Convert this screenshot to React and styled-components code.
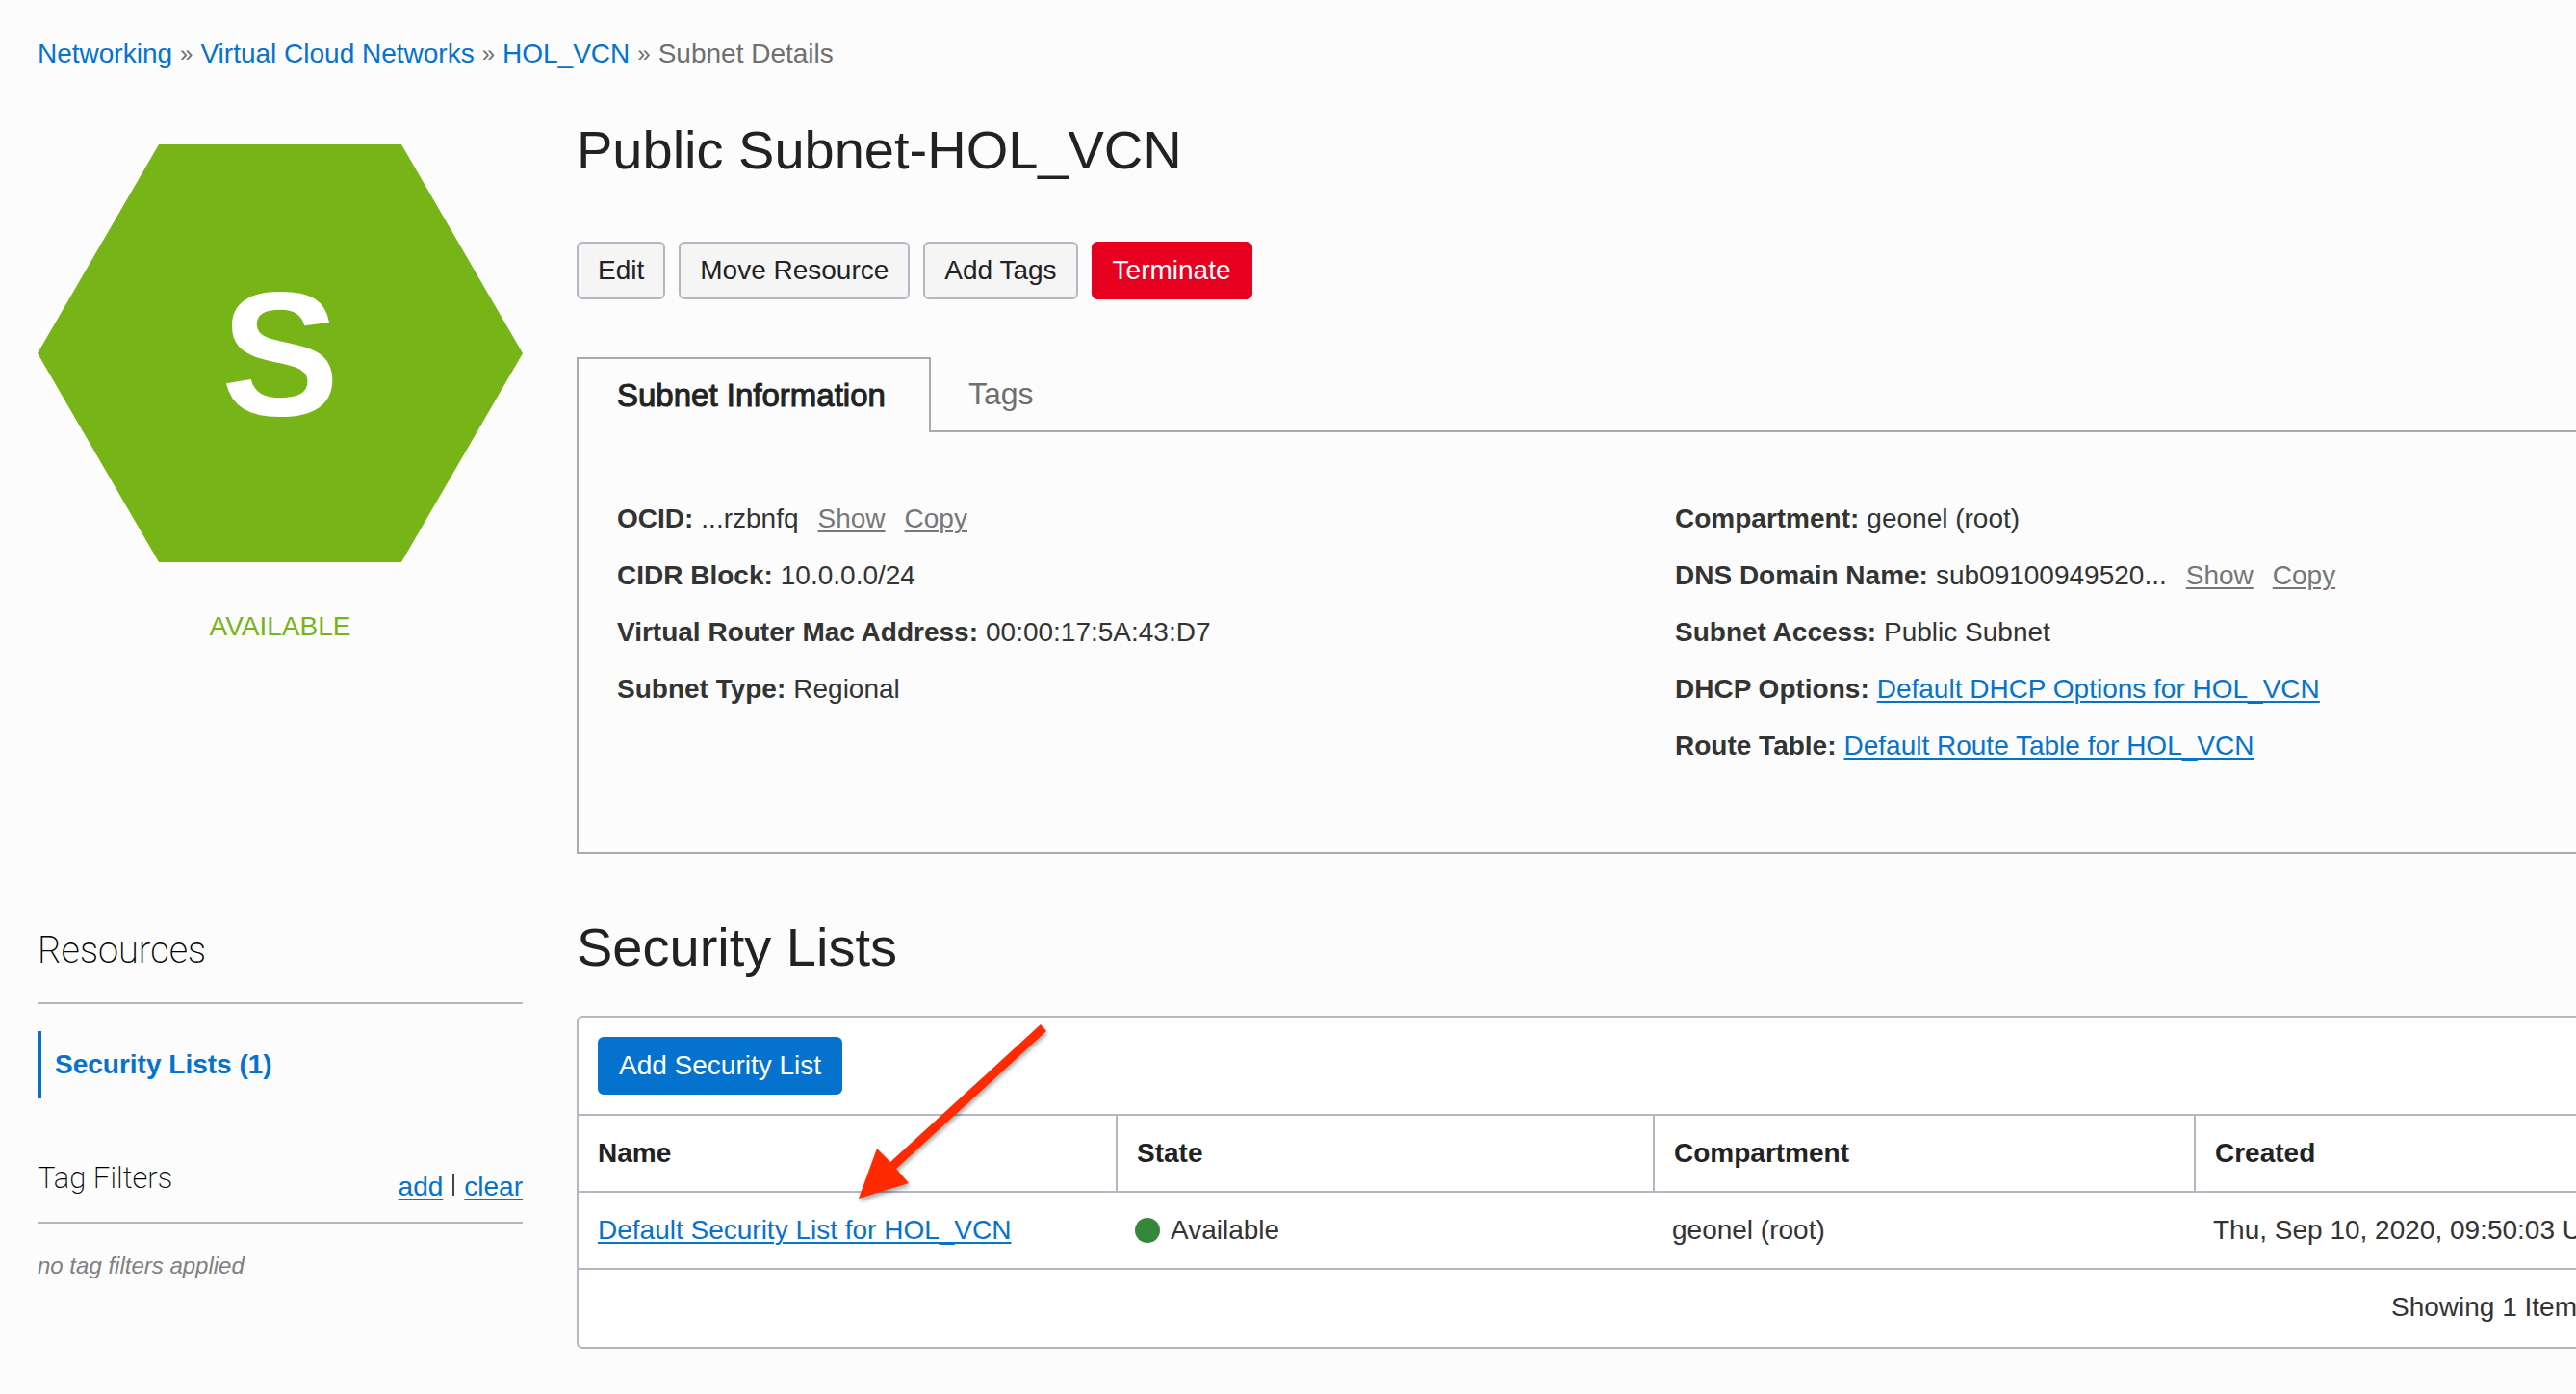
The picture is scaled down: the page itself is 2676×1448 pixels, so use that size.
import React from "react";
import styled, { createGlobalStyle, css } from "styled-components";

const color = {
  page: "#fcfcfc",
  link: "#0572ce",
  heading: "#222222",
  text: "#333333",
  muted: "#6f6f6f",
  line: "#b2b8c2",
  panelLine: "#aaaaaa",
  green: "#77b418",
  danger: "#e7001f",
};

const GlobalStyle = createGlobalStyle`
  *, *::before, *::after { box-sizing: border-box; }
  body {
    margin: 0;
    overflow-x: hidden;
    background: ${color.page};
    color: ${color.text};
    font-family: "Helvetica Neue", "Liberation Sans", Arial, sans-serif;
    font-size: 28px;
    line-height: 36px;
  }
  h1, h2, h3, p, ul, ol, dl, dd { margin: 0; padding: 0; }
  button { font: inherit; cursor: pointer; }
`;

/* The console is wider than the window; its right edge runs out of view. */
const Page = styled.div`
  width: calc(100% + 204px);
  padding: 38px 39px 47px;
`;

const Breadcrumb = styled.nav`
  display: flex;
  gap: 8px;
  color: ${color.muted};
`;

const Crumb = styled.a`
  color: ${color.link};
  text-decoration: none;
`;

const Separator = styled.span`
  font-size: 24px;
`;

const Layout = styled.div`
  display: grid;
  grid-template-columns: 504px minmax(0, 1fr);
  column-gap: 56px;
  row-gap: 65px;
  padding-top: 50px;
`;

const StatusPane = styled.aside`
  display: flex;
  flex-direction: column;
  gap: 49px;
  padding-top: 26px;
  text-align: center;
`;

const Hexagon = styled.div`
  display: flex;
  align-items: center;
  justify-content: center;
  height: 434px;
  background: ${color.green};
  clip-path: polygon(25% 0, 75% 0, 100% 50%, 75% 100%, 25% 100%, 0 50%);
  color: #ffffff;
  font-size: 184px;
  font-weight: 700;
  line-height: 200px;
`;

const StatusText = styled.p`
  color: ${color.green};
`;

const Main = styled.main`
  min-width: 0;
`;

const Title = styled.h1`
  color: ${color.heading};
  font-size: 56px;
  font-weight: 400;
  line-height: 64px;
`;

const ButtonRow = styled.div`
  display: flex;
  gap: 14px;
  margin: 63px 0 60px;
`;

const variants = {
  plain: css`
    background: #f5f5f5;
    border-color: ${color.line};
    color: ${color.heading};
  `,
  danger: css`
    background: ${color.danger};
    border-color: ${color.danger};
    color: #ffffff;
  `,
  primary: css`
    background: ${color.link};
    border-color: ${color.link};
    color: #ffffff;
  `,
};

const Button = styled.button`
  height: 60px;
  padding: 0 20px;
  border: 2px solid;
  border-radius: 6px;
  ${(p) => variants[p.$variant || "plain"]}
`;

const TabList = styled.div`
  display: flex;
  height: 78px;

  &::after {
    content: "";
    flex: 1;
    border-bottom: 2px solid ${color.panelLine};
  }
`;

const Tab = styled.button`
  background: none;
  border: 0 solid ${color.panelLine};
  border-bottom-width: 2px;
  padding: 0 39px;
  color: ${color.muted};
  font-size: 32px;
  line-height: 40px;
  text-align: left;

  &[aria-selected="true"] {
    min-width: 368px;
    padding: 0 40px;
    border-width: 2px 2px 0;
    color: ${color.heading};
    font-size: 33px;
    -webkit-text-stroke: 1px ${color.heading};
  }
`;

const TabPanel = styled.div`
  display: grid;
  grid-template-columns: 1fr 1fr;
  gap: 40px;
  padding: 60px 40px 81px;
  border: 2px solid ${color.panelLine};
  border-top: 0;
`;

const FactRow = styled.div`
  display: flex;
  gap: 8px;
  line-height: 59px;
`;

const FactLabel = styled.dt`
  font-weight: 700;
`;

const FactValue = styled.dd`
  display: flex;
  gap: 20px;
`;

const underline = css`
  text-decoration: underline;
  text-decoration-thickness: 2px;
  text-underline-offset: 3px;
`;

const Link = styled.a`
  color: ${color.link};
  ${underline}
`;

const TextButton = styled.button`
  padding: 0;
  border: 0;
  background: none;
  color: ${(p) => (p.$accent ? color.link : "#777777")};
  ${underline}
`;

const ResourcePane = styled.aside`
  padding-top: 11px;
`;

const PaneTitle = styled.h2`
  padding-bottom: 30px;
  border-bottom: 2px solid ${color.line};
  color: #000000;
  font-family: Roboto, "Liberation Sans", sans-serif;
  font-size: 38px;
  font-weight: 200;
  line-height: 48px;
`;

const ResourceLink = styled.a`
  display: flex;
  align-items: center;
  height: 70px;
  margin-top: 28px;
  padding-left: 14px;
  border-left: 4px solid ${color.link};
  color: ${color.link};
  font-weight: 700;
  text-decoration: none;
`;

const FilterHeader = styled.div`
  display: flex;
  justify-content: space-between;
  height: 67px;
  margin-top: 63px;
  border-bottom: 2px solid ${color.line};
`;

const FilterTitle = styled.h3`
  color: #000000;
  font-family: Roboto, "Liberation Sans", sans-serif;
  font-size: 31px;
  font-weight: 200;
  line-height: 40px;
`;

const FilterActions = styled.div`
  display: flex;
  gap: 10px;
  height: 47px;
  padding-top: 11px;
`;

const Divider = styled.span`
  width: 2px;
  height: 23px;
  margin-top: 4px;
  background: #444444;
`;

const FilterNote = styled.p`
  margin-top: 28px;
  color: #808080;
  font-size: 24px;
  font-style: italic;
  line-height: 32px;
`;

const Card = styled.section`
  position: relative;
  margin-top: 39px;
  background: #ffffff;
  border: 2px solid ${color.line};
  border-radius: 6px;
`;

const CardToolbar = styled.div`
  padding: 20px;
`;

const Table = styled.table`
  width: 100%;
  table-layout: fixed;
  border-spacing: 0;
  border: solid ${color.line};
  border-width: 2px 0;
`;

const Col = styled.col`
  width: ${(p) => p.$width};
`;

const Th = styled.th`
  height: 78px;
  padding: 0 20px;
  color: ${color.heading};
  text-align: left;

  & + & {
    border-left: 2px solid ${color.line};
  }
`;

const Td = styled.td`
  height: 80px;
  padding: 0 20px;
  border-top: 2px solid ${color.line};
  white-space: nowrap;
`;

const State = styled.span`
  display: flex;
  align-items: center;
  gap: 11px;

  &::before {
    content: "";
    width: 26px;
    height: 26px;
    border-radius: 50%;
    background: #35883a;
  }
`;

const CardFooter = styled.div`
  padding: 21px 162px 23px 20px;
  text-align: right;
`;

const Arrow = styled.svg`
  position: absolute;
  left: 279px;
  top: -3px;
  filter: drop-shadow(1px 3px 2px rgba(0, 0, 0, 0.35));
  pointer-events: none;
`;

const leftFacts = [
  { label: "OCID:", value: "...rzbnfq", actions: true },
  { label: "CIDR Block:", value: "10.0.0.0/24" },
  { label: "Virtual Router Mac Address:", value: "00:00:17:5A:43:D7" },
  { label: "Subnet Type:", value: "Regional" },
];

const rightFacts = [
  { label: "Compartment:", value: "geonel (root)" },
  { label: "DNS Domain Name:", value: "sub09100949520...", actions: true },
  { label: "Subnet Access:", value: "Public Subnet" },
  { label: "DHCP Options:", value: "Default DHCP Options for HOL_VCN", link: true },
  { label: "Route Table:", value: "Default Route Table for HOL_VCN", link: true },
];

function Facts({ items }) {
  return (
    <dl>
      {items.map((f) => (
        <FactRow key={f.label}>
          <FactLabel>{f.label}</FactLabel>
          <FactValue>
            {f.link ? <Link href="#">{f.value}</Link> : <span>{f.value}</span>}
            {f.actions && <TextButton type="button">Show</TextButton>}
            {f.actions && <TextButton type="button">Copy</TextButton>}
          </FactValue>
        </FactRow>
      ))}
    </dl>
  );
}

export default function App() {
  return (
    <>
      <GlobalStyle />
      <Page>
        <Breadcrumb aria-label="Breadcrumb">
          <Crumb href="#">Networking</Crumb>
          <Separator>»</Separator>
          <Crumb href="#">Virtual Cloud Networks</Crumb>
          <Separator>»</Separator>
          <Crumb href="#">HOL_VCN</Crumb>
          <Separator>»</Separator>
          <span>Subnet Details</span>
        </Breadcrumb>

        <Layout>
          <StatusPane>
            <Hexagon>S</Hexagon>
            <StatusText>AVAILABLE</StatusText>
          </StatusPane>

          <Main>
            <Title>Public Subnet-HOL_VCN</Title>
            <ButtonRow>
              <Button type="button">Edit</Button>
              <Button type="button">Move Resource</Button>
              <Button type="button">Add Tags</Button>
              <Button type="button" $variant="danger">Terminate</Button>
            </ButtonRow>
            <TabList role="tablist">
              <Tab type="button" role="tab" aria-selected="true">Subnet Information</Tab>
              <Tab type="button" role="tab" aria-selected="false">Tags</Tab>
            </TabList>
            <TabPanel role="tabpanel">
              <Facts items={leftFacts} />
              <Facts items={rightFacts} />
            </TabPanel>
          </Main>

          <ResourcePane>
            <PaneTitle>Resources</PaneTitle>
            <ResourceLink href="#">Security Lists (1)</ResourceLink>
            <FilterHeader>
              <FilterTitle>Tag Filters</FilterTitle>
              <FilterActions>
                <TextButton type="button" $accent>add</TextButton>
                <Divider />
                <TextButton type="button" $accent>clear</TextButton>
              </FilterActions>
            </FilterHeader>
            <FilterNote>no tag filters applied</FilterNote>
          </ResourcePane>

          <div>
            <Title as="h2">Security Lists</Title>
            <Card>
              <CardToolbar>
                <Button type="button" $variant="primary">Add Security List</Button>
              </CardToolbar>
              <Table>
                <colgroup>
                  <Col $width="558px" />
                  <Col $width="558px" />
                  <Col $width="562px" />
                  <Col />
                </colgroup>
                <thead>
                  <tr>
                    <Th scope="col">Name</Th>
                    <Th scope="col">State</Th>
                    <Th scope="col">Compartment</Th>
                    <Th scope="col">Created</Th>
                  </tr>
                </thead>
                <tbody>
                  <tr>
                    <Td><Link href="#">Default Security List for HOL_VCN</Link></Td>
                    <Td><State>Available</State></Td>
                    <Td>geonel (root)</Td>
                    <Td>Thu, Sep 10, 2020, 09:50:03 UTC</Td>
                  </tr>
                </tbody>
              </Table>
              <CardFooter>Showing 1 Item</CardFooter>
              <Arrow width="220" height="200" viewBox="880 1054 220 200" aria-hidden="true">
                <path d="M892 1245 L911 1193 L925 1207 L1081 1064 L1087 1071 L931 1214 L944 1229 Z" fill="#ff2a00" />
              </Arrow>
            </Card>
          </div>
        </Layout>
      </Page>
    </>
  );
}
